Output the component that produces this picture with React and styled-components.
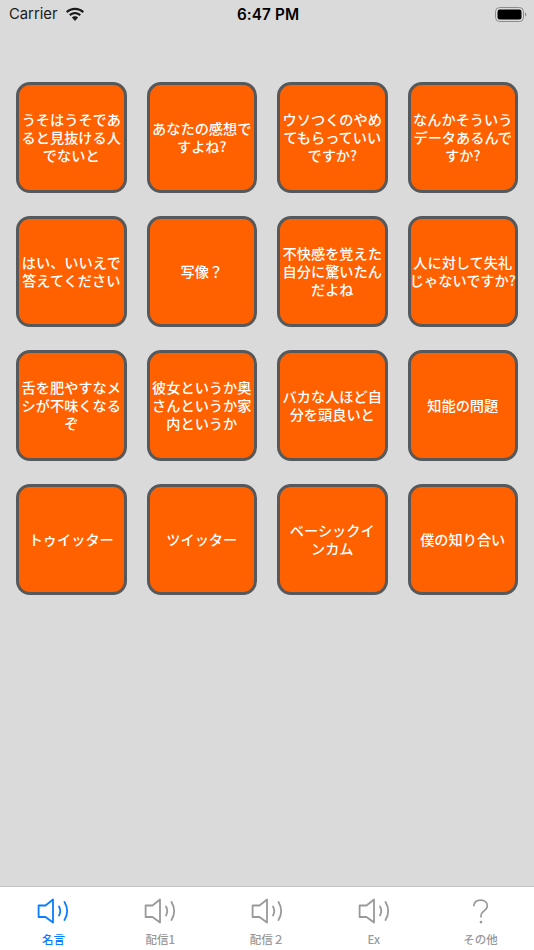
import React from "react";
import styled, { createGlobalStyle } from "styled-components";

const Global = createGlobalStyle`
  html, body { margin: 0; padding: 0; background: #dadada; }
  * { box-sizing: border-box; }
`;

const Screen = styled.div`
  width: 534px;
  height: 950px;
  background: #dadada;
  display: flex;
  flex-direction: column;
  overflow: hidden;
  font-family: "Liberation Sans", "Noto Sans CJK JP", sans-serif;
`;

const StatusBar = styled.div`
  height: 28px;
  display: grid;
  grid-template-columns: 1fr auto 1fr;
  align-items: center;
  padding: 0 7px 0 9px;
  color: #000;
  font-family: Inter, "Liberation Sans", sans-serif;
`;

const StatusLeft = styled.div`
  display: flex;
  align-items: center;
  gap: 7px;
  font-size: 14.8px;
  color: #1a1a1a;
`;

const Clock = styled.div`
  font-size: 15.3px;
  font-weight: 600;
  letter-spacing: 0.1px;
`;

const StatusRight = styled.div`
  display: flex;
  justify-content: flex-end;
`;

const Grid = styled.div`
  flex: 1;
  padding: 54px 16px 0;
  display: grid;
  grid-template-columns: repeat(4, 110.5px);
  grid-auto-rows: 110.5px;
  column-gap: 20px;
  row-gap: 23.5px;
  align-content: start;
`;

const Tile = styled.div`
  border: 3px solid #56595c;
  border-radius: 14px;
  background: #ff6000;
  color: #fff;
  display: flex;
  align-items: center;
  justify-content: center;
  text-align: center;
  white-space: pre;
  font-family: "Noto Sans CJK JP", sans-serif;
  font-size: 14.2px;
  font-weight: 500;
  line-height: 18px;
  margin-top: -0.5px;
`;

const TabBar = styled.div`
  height: 64px;
  background: #fff;
  border-top: 1px solid #c4c4c4;
  display: grid;
  grid-template-columns: repeat(5, 1fr);
`;

const Tab = styled.div`
  display: flex;
  flex-direction: column;
  align-items: center;
  padding-top: 11px;
  color: ${(p) => (p.$active ? "#0a7cff" : "#999999")};
`;

const TabIcon = styled.div`
  height: 32px;
  display: flex;
  align-items: flex-start;
  justify-content: center;
`;

const TabLabel = styled.div`
  margin-top: 2px;
  font-family: "Noto Sans CJK JP", sans-serif;
  font-size: 11.5px;
  line-height: 14px;
  font-weight: 500;
`;

const Wifi = () => (
  <svg width="20" height="15" viewBox="0 0 18 13.500" fill="currentColor">
    <path d="M9 2.600c2.600 0 5 1 6.800 2.700l1.300-1.500C15 1.800 12.100.6 9 .6S3 1.800.9 3.800l1.300 1.500C4 3.600 6.400 2.600 9 2.600z" />
    <path d="M9 6.500c1.500 0 2.900.6 4 1.600l1.400-1.500C13 5.200 11.100 4.400 9 4.400s-4 .8-5.400 2.200L5 8.100c1.100-1 2.500-1.600 4-1.600z" />
    <path d="M9 8.300c-1.100 0-2.100.4-2.800 1.100L9 12.600l2.800-3.200C11.100 8.700 10.100 8.300 9 8.300z" />
  </svg>
);

const Battery = () => (
  <svg width="32" height="15" viewBox="0 0 32 15">
    <rect x=".5" y=".5" width="28" height="14" rx="4" fill="none" stroke="#8c8c8c" strokeWidth="1" />
    <rect x="2.500" y="2.500" width="24" height="10" rx="2.200" fill="#000" />
    <path d="M30 5.500v4c.8-.3 1.300-1.100 1.300-2s-.5-1.700-1.300-2z" fill="#8c8c8c" />
  </svg>
);

const Speaker = () => (
  <svg width="32" height="26" viewBox="0 0 32 26" fill="none" stroke="currentColor" strokeWidth="1.800" strokeLinejoin="round" strokeLinecap="round">
    <path d="M16 1.500v23L8.500 19H1.600V7.500h6.900z" />
    <path d="M22 8.500c1.700 3 1.700 6 0 9" />
    <path d="M27.500 4c3.300 5.500 3.300 12.500 0 18" />
  </svg>
);

const Question = () => (
  <svg width="18" height="27" viewBox="0 0 20 28" fill="none" stroke="currentColor" strokeWidth="1.800" strokeLinecap="round">
    <path d="M2 7.500C2.500 3.500 5.500 1.300 9.500 1.300c4.500 0 7.500 2.700 7.500 6.200 0 2.600-1.400 4.200-3.600 5.800-2.300 1.700-3.400 3-3.400 5.700v1" />
    <circle cx="10" cy="25.700" r="1.500" fill="currentColor" stroke="none" />
  </svg>
);

const tiles = [
  "うそはうそであ\nると見抜ける人\nでないと",
  "あなたの感想で\nすよね?",
  "ウソつくのやめ\nてもらっていい\nですか?",
  "なんかそういう\nデータあるんで\nすか?",
  "はい、いいえで\n答えてください",
  "写像？",
  "不快感を覚えた\n自分に驚いたん\nだよね",
  "人に対して失礼\nじゃないですか?",
  "舌を肥やすなメ\nシが不味くなる\nぞ",
  "彼女というか奥\nさんというか家\n内というか",
  "バカな人ほど自\n分を頭良いと",
  "知能の問題",
  "トゥイッター",
  "ツイッター",
  "ベーシックイ\nンカム",
  "僕の知り合い",
];

const tabs = [
  { label: "名言", active: true },
  { label: "配信1" },
  { label: "配信２" },
  { label: "Ex" },
  { label: "その他", question: true },
];

export default function App() {
  return (
    <Screen>
      <Global />
      <StatusBar>
        <StatusLeft>
          Carrier
          <Wifi />
        </StatusLeft>
        <Clock>6:47 PM</Clock>
        <StatusRight>
          <Battery />
        </StatusRight>
      </StatusBar>
      <Grid>
        {tiles.map((t) => (
          <Tile key={t}>{t}</Tile>
        ))}
      </Grid>
      <TabBar>
        {tabs.map((t) => (
          <Tab key={t.label} $active={t.active}>
            <TabIcon>{t.question ? <Question /> : <Speaker />}</TabIcon>
            <TabLabel>{t.label}</TabLabel>
          </Tab>
        ))}
      </TabBar>
    </Screen>
  );
}
